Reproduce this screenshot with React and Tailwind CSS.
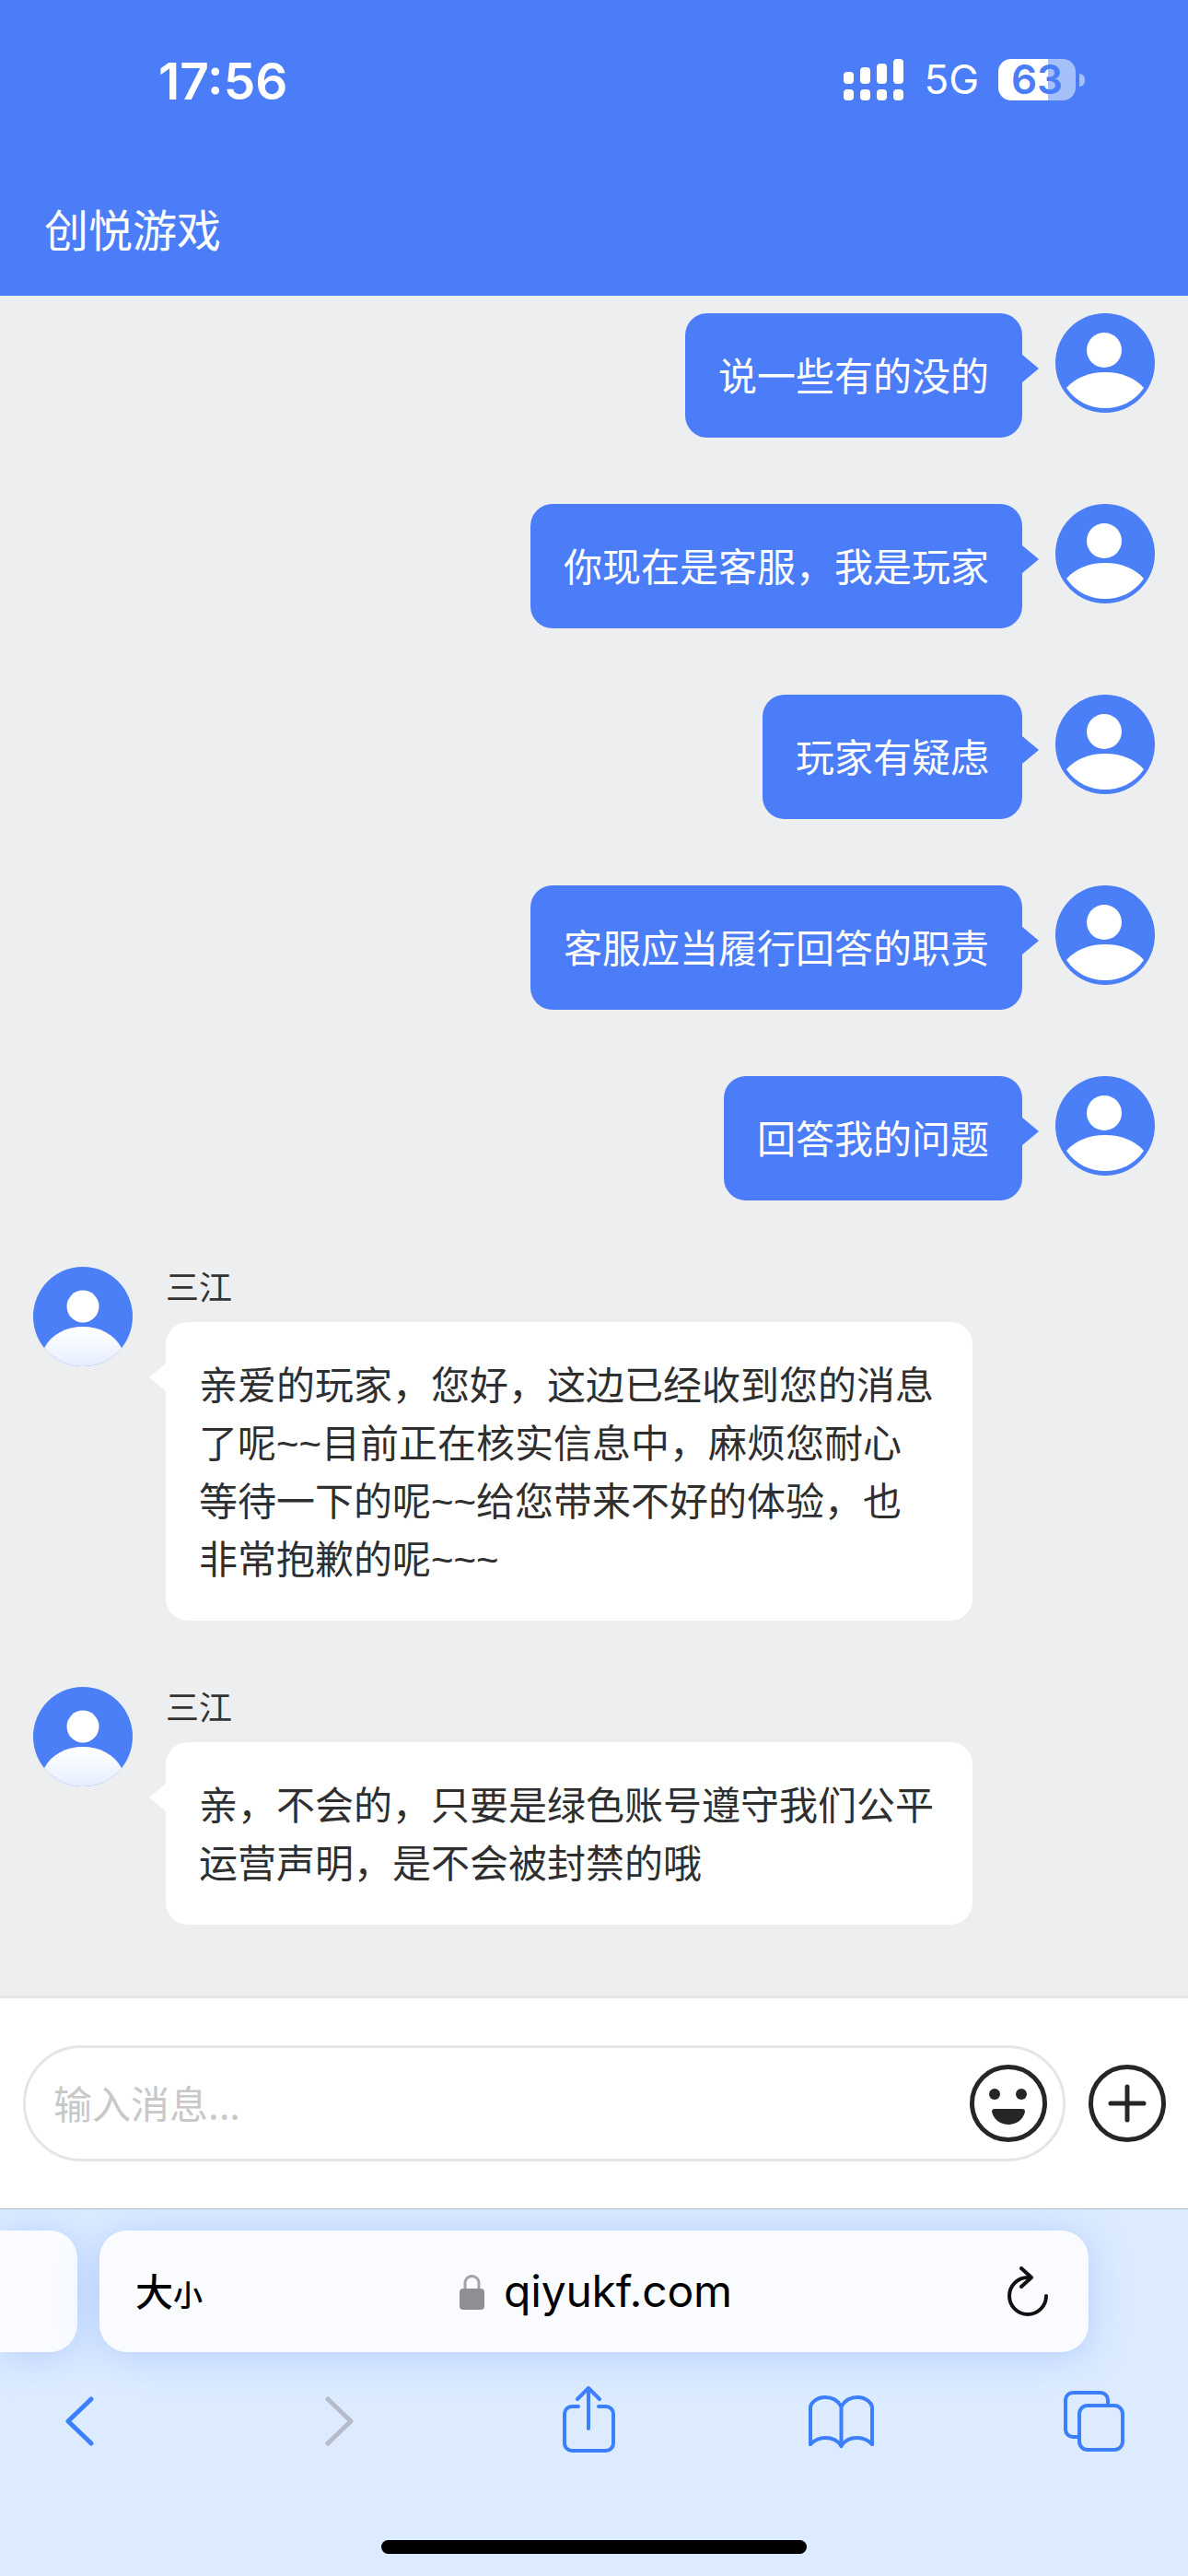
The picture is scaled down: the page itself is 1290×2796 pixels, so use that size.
const SENT = [
  "说一些有的没的",
  "你现在是客服，我是玩家",
  "玩家有疑虑",
  "客服应当履行回答的职责",
  "回答我的问题",
]

const RECEIVED = [
  "亲爱的玩家，您好，这边已经收到您的消息了呢~~目前正在核实信息中，麻烦您耐心等待一下的呢~~给您带来不好的体验，也非常抱歉的呢~~~",
  "亲，不会的，只要是绿色账号遵守我们公平运营声明，是不会被封禁的哦",
]

function UserAvatar() {
  return (
    <svg viewBox="0 0 108 108" className="w-[108px] h-[108px] shrink-0">
      <circle cx="54" cy="54" r="54" fill="#4a7ff7" />
      <circle cx="53" cy="40" r="19" fill="#fff" />
      <path d="M12 81 C22 70 36 64 54 64 C72 64 86 70 96 81 C86 96 70 103 54 103 C38 103 22 96 12 81 Z" fill="#fff" />
    </svg>
  )
}

function AgentAvatar({ id }) {
  return (
    <svg viewBox="0 0 108 108" className="w-[108px] h-[108px] shrink-0">
      <defs>
        <linearGradient id={id} x1="0" y1="0" x2="0" y2="1">
          <stop offset="0" stopColor="#ffffff" />
          <stop offset="1" stopColor="#e6eeff" />
        </linearGradient>
        <clipPath id={`${id}-clip`}>
          <circle cx="54" cy="54" r="54" />
        </clipPath>
      </defs>
      <circle cx="54" cy="54" r="54" fill="#4a7ff7" />
      <circle cx="54" cy="43" r="17.5" fill="#fff" />
      <path d="M12 88 C20 73 36 65 54 65 C72 65 88 73 96 88 L96 108 L12 108 Z" fill={`url(#${id})`} clipPath={`url(#${id}-clip)`} />
    </svg>
  )
}

function SentRow({ text }) {
  return (
    <div className="flex justify-end items-start pr-[36px]">
      <div className="relative mr-[36px] px-[36px] pt-[34px] pb-[38px] rounded-[24px] bg-[#4a7df7] text-white text-[42px] leading-[63px]">
        {text}
        <span className="absolute top-[45px] left-full w-0 h-0 border-y-[15px] border-y-transparent border-l-[18px] border-l-[#4a7df7]" />
      </div>
      <UserAvatar />
    </div>
  )
}

function ReceivedRow({ text, id }) {
  return (
    <div className="flex items-start pl-[36px]">
      <AgentAvatar id={id} />
      <div className="ml-[36px] w-[876px]">
        <div className="h-[60px] text-[36px] leading-[40px] text-[#333]">三江</div>
        {/* Liberation first so the tildes come out at the original width */}
        <div className="relative px-[36px] pt-[38px] pb-[34px] rounded-[24px] bg-white text-[#2f2f2f] text-[42px] leading-[63px] font-['Liberation_Sans','Noto_Sans_CJK_SC',sans-serif]">
          {text}
          <span className="absolute top-[45px] right-full w-0 h-0 border-y-[15px] border-y-transparent border-r-[18px] border-r-white" />
        </div>
      </div>
    </div>
  )
}

function StatusBar() {
  return (
    <div className="flex items-center h-[45px] mt-[64px] pl-[172px] pr-[112px] text-white">
      <span className="pt-[3px] font-['Inter',sans-serif] font-semibold text-[55px] leading-[45px]">17:56</span>
      <div className="flex items-center ml-auto">
        <svg viewBox="0 0 65 45" className="w-[65px] h-[45px]" fill="#fff">
          <rect x="0" y="14" width="11" height="13" rx="4" />
          <rect x="18" y="9" width="11" height="18" rx="4" />
          <rect x="36" y="5" width="11" height="22" rx="4" />
          <rect x="54" y="0" width="11" height="27" rx="4" />
          <rect x="0" y="33" width="11" height="12" rx="4" />
          <rect x="18" y="33" width="11" height="12" rx="4" />
          <rect x="36" y="33" width="11" height="12" rx="4" />
          <rect x="54" y="33" width="11" height="12" rx="4" />
        </svg>
        <span className="ml-[22px] font-['Inter',sans-serif] text-[44px] leading-[45px]">5G</span>
        <div className="ml-[21px] flex items-center justify-center w-[84px] h-[45px] rounded-[14px] bg-[linear-gradient(90deg,#ffffff_64%,#a5c0f9_64%)] text-[#4a7df7] font-['Inter',sans-serif] font-semibold text-[44px] leading-[45px]">
          63
        </div>
        <span className="ml-[4px] w-[6px] h-[14px] rounded-r-full bg-[#a5c0f9]" />
      </div>
    </div>
  )
}

function InputBar() {
  return (
    <div className="flex items-center h-[232px] pl-[25px] bg-white border-t-[3px] border-t-[#e5e5e5] border-b border-b-[#adb8cc]">
      <div className="flex items-center justify-between w-[1132px] h-[126px] pl-[30px] pr-[17px] rounded-full border-[3px] border-[#e5e5e5] text-[42px] text-[#c8c8c8]">
        <span className="pb-[4px]">输入消息...</span>
        <svg viewBox="0 0 84 84" className="w-[84px] h-[84px]">
          <circle cx="42" cy="42" r="39.5" fill="none" stroke="#262626" strokeWidth="5" />
          <circle cx="27" cy="32" r="6" fill="#262626" />
          <circle cx="56" cy="32" r="6" fill="#262626" />
          <path d="M27 48 H57 Q60 48 60 51 C58 60 50 65 42 65 C34 65 26 60 24 51 Q24 48 27 48 Z" fill="#262626" />
        </svg>
      </div>
      <svg viewBox="0 0 84 84" className="ml-[25px] w-[84px] h-[84px]">
        <circle cx="42" cy="42" r="39.5" fill="none" stroke="#262626" strokeWidth="5" />
        <path d="M42 24 V60 M24 42 H60" fill="none" stroke="#262626" strokeWidth="5" strokeLinecap="round" />
      </svg>
    </div>
  )
}

function SafariBar() {
  return (
    <div className="flex-1 flex flex-col overflow-hidden bg-[#dcebff]">
      {/* ==================== Address ==================== */}
      <div className="flex gap-[24px] mt-[23px] h-[132px]">
        <div className="w-[84px] rounded-r-[30px] bg-[#f9fbff] shadow-[0_4px_40px_rgba(120,160,255,0.4)]" />
        <div className="flex items-center w-[1074px] pl-[39px] pr-[44px] rounded-[30px] bg-[#f9fbff] shadow-[0_4px_40px_rgba(120,160,255,0.4)]">
          <span className="flex items-baseline text-black font-medium text-[41px] leading-[50px]">
            大<span className="text-[32px]">小</span>
          </span>
          <svg viewBox="0 0 27 39" className="ml-[279px] w-[27px] h-[39px]">
            <path d="M6 18 V10 a7.5 7.5 0 0 1 15 0 V18" fill="none" stroke="#a3a3a8" strokeWidth="3" />
            <rect x="0" y="16" width="27" height="23" rx="4" fill="#8e8e93" />
          </svg>
          <span className="ml-[21px] font-['Inter',sans-serif] text-[48px] leading-[60px] tracking-[-0.2px] text-black">qiyukf.com</span>
          <svg viewBox="0 0 44 54" className="ml-auto w-[44px] h-[54px]" fill="none" stroke="#111" strokeWidth="4" strokeLinecap="round" strokeLinejoin="round">
            <path d="M22 12 A20 20 0 1 0 42 32" />
            <path d="M15 2 L26 12 L15 22" />
          </svg>
        </div>
      </div>

      {/* ==================== Toolbar ==================== */}
      <div className="flex items-start mt-[37px] pl-[71px] h-[72px]">
        <svg viewBox="0 0 31 54" className="mt-[11px] w-[31px] h-[54px]" fill="none" stroke="#3b7ffb" strokeWidth="5" strokeLinecap="round" strokeLinejoin="round">
          <path d="M28 3 L3 27 L28 51" />
        </svg>
        <svg viewBox="0 0 31 54" className="ml-[251px] mt-[11px] w-[31px] h-[54px]" fill="none" stroke="#b6bccb" strokeWidth="5" strokeLinecap="round" strokeLinejoin="round">
          <path d="M3 3 L28 27 L3 51" />
        </svg>
        <svg viewBox="0 0 57 72" className="ml-[227px] w-[57px] h-[72px]" fill="none" stroke="#3b7ffb" strokeWidth="4" strokeLinecap="round" strokeLinejoin="round">
          <path d="M17 22 H10 a8 8 0 0 0 -8 8 V62 a8 8 0 0 0 8 8 H47 a8 8 0 0 0 8 -8 V30 a8 8 0 0 0 -8 -8 H39" />
          <path d="M28 46 V3 M16 14 L28 2 L40 14" />
        </svg>
        <svg viewBox="0 0 71 58" className="ml-[210px] mt-[9px] w-[71px] h-[58px]" fill="none" stroke="#3b7ffb" strokeWidth="4" strokeLinecap="round" strokeLinejoin="round">
          <path d="M2 54 V14 C2 10 8 3 18 3 C26 3 32 7 35.5 13 C39 7 45 3 53 3 C63 3 69 10 69 14 V54" />
          <path d="M2 54 C6 50 12 47 18 47 C26 47 32 50 35.5 56 C39 50 45 47 53 47 C59 47 65 50 69 54" />
          <path d="M35.5 13 V56" />
        </svg>
        <svg viewBox="0 0 66 66" className="ml-[206px] mt-[5px] w-[66px] h-[66px]" fill="none" stroke="#3b7ffb" strokeWidth="4" strokeLinecap="round" strokeLinejoin="round">
          <path d="M15 50 H10 a8 8 0 0 1 -8 -8 V10 a8 8 0 0 1 8 -8 H40 a8 8 0 0 1 8 8 V14" />
          <rect x="17" y="16" width="47" height="48" rx="9" />
        </svg>
      </div>

      <div className="mt-auto mb-[24px] mx-auto w-[462px] h-[15px] rounded-full bg-black" />
    </div>
  )
}

export default function App() {
  return (
    <div className="flex flex-col w-[1290px] h-[2796px] overflow-hidden bg-[#edeef0] font-['Noto_Sans_CJK_SC',sans-serif]">
      {/* ==================== Header ==================== */}
      <header className="flex flex-col h-[321px] bg-[#4a7df7]">
        <StatusBar />
        <h1 className="mt-auto pb-[38px] pl-[48px] text-white text-[48px] leading-[72px] font-normal">创悦游戏</h1>
      </header>

      {/* ==================== Messages ==================== */}
      <main className="flex flex-col flex-1 gap-[72px] pt-[19px]">
        {SENT.map((text) => (
          <SentRow key={text} text={text} />
        ))}
        {RECEIVED.map((text, i) => (
          <ReceivedRow key={text} text={text} id={`agent-${i}`} />
        ))}
      </main>

      <InputBar />
      <div className="flex flex-col h-[398px]">
        <SafariBar />
      </div>
    </div>
  )
}
